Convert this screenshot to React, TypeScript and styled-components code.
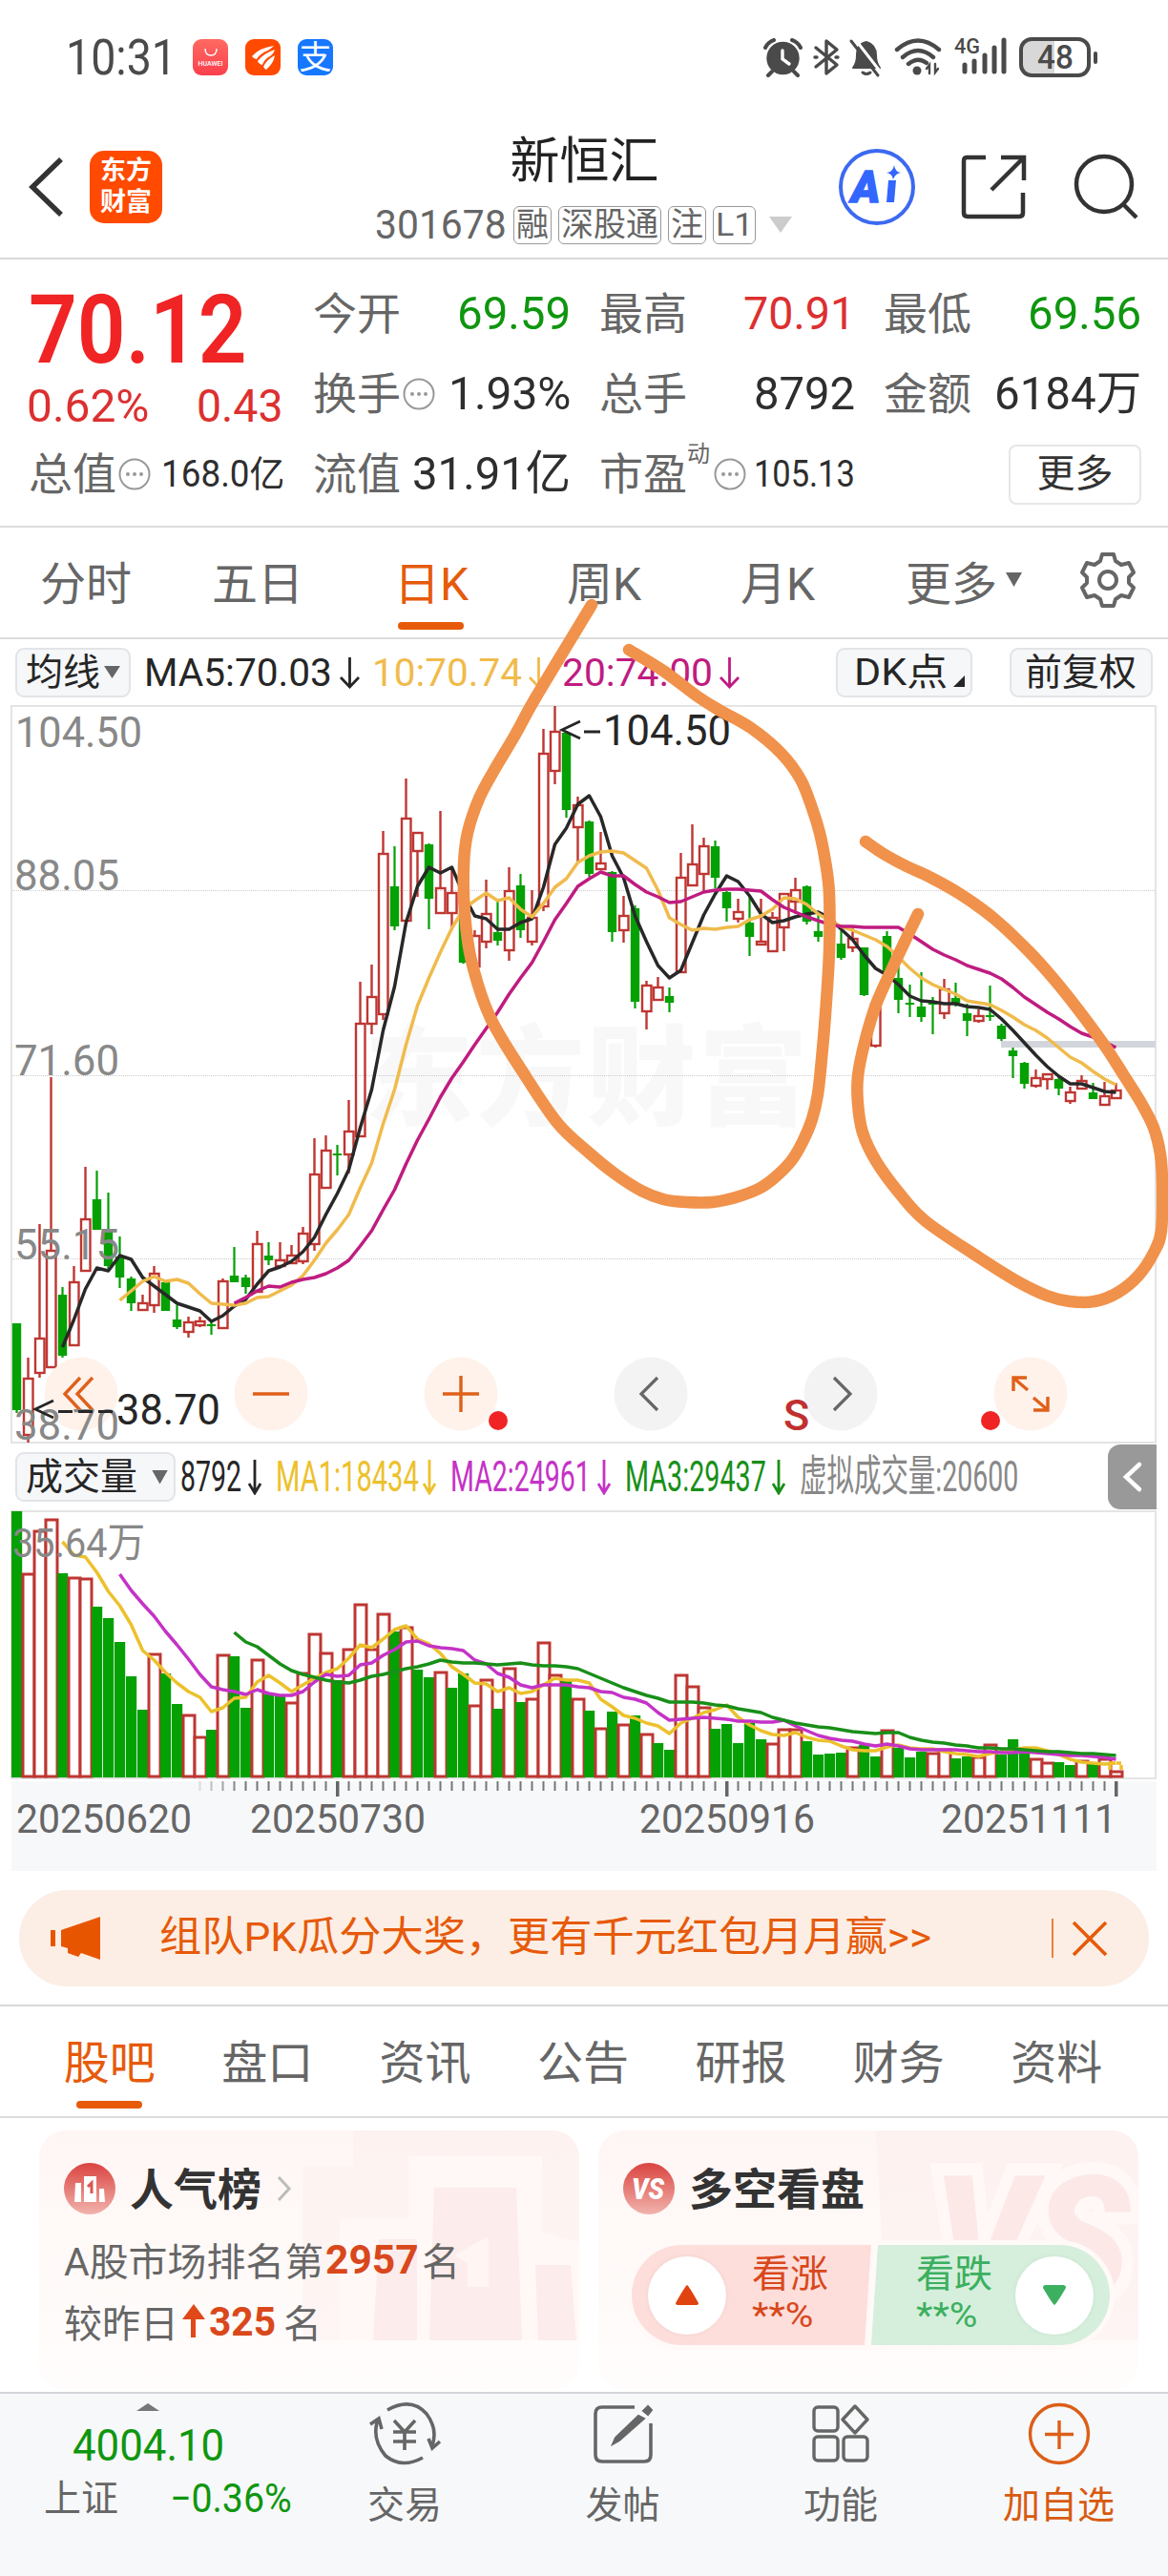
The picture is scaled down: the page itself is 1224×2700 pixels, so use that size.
import React, { useLayoutEffect, useRef, useState } from 'react'
import styled, { createGlobalStyle } from 'styled-components'

const ORANGE = '#e65a0a'
const RED = '#dc3030'
const GREEN = '#0f960f'
const GREY = '#666'
const DARK = '#262626'

const GlobalStyle = createGlobalStyle`
    * { box-sizing: border-box; }
    body {
        margin: 0;
        background: #fff;
        font-family: Roboto, 'Noto Sans CJK SC', sans-serif;
        color: ${DARK};
    }
    svg { display: block; flex: none; }
`

/* ---------- shared ---------- */

const FitBox = styled.span<{ $w: number }>`
    display: block;
    flex: none;
    width: ${(p) => p.$w}px;
    white-space: nowrap;
`

const FitInner = styled.span`
    display: inline-block;
    transform-origin: left center;
`

// squeezes or stretches a text so that it fills a given width
const Fit = ({ w, children }: { w: number; children: React.ReactNode }) => {
    const ref = useRef<HTMLSpanElement>(null)
    const [scale, setScale] = useState(1)
    useLayoutEffect(() => {
        if (ref.current && ref.current.offsetWidth) setScale(w / ref.current.offsetWidth)
    }, [w])
    return (
        <FitBox $w={w}>
            <FitInner ref={ref} style={{ transform: `scaleX(${scale})` }}>{children}</FitInner>
        </FitBox>
    )
}

const Page = styled.div`
    position: relative;
    width: 1224px;
    height: 2700px;
    overflow: hidden;
    background: #fff;
    display: flex;
    flex-direction: column;
`

const Gap = styled.i<{ $w: number }>`
    flex: none;
    width: ${(p) => p.$w}px;
`

const Triangle = styled.i<{ $w: number; $h: number; $color: string; $up?: boolean }>`
    display: block;
    flex: none;
    width: ${(p) => p.$w}px;
    height: ${(p) => p.$h}px;
    background: ${(p) => p.$color};
    clip-path: ${(p) => (p.$up ? 'polygon(50% 0, 100% 100%, 0 100%)' : 'polygon(0 0, 100% 0, 50% 100%)')};
`

/* ---------- status bar ---------- */

const StatusBar = styled.div`
    height: 120px;
    display: flex;
    align-items: center;
    padding: 0 74px 0 69px;
`

const Clock = styled.div`
    font-size: 51px;
    color: #4a4a4a;
    width: 133px;
    line-height: 60px;
    padding-top: 2px;
`

const AppBadge = styled.div<{ $bg: string }>`
    width: 37px;
    height: 38px;
    margin-right: 18px;
    border-radius: 9px;
    background: ${(p) => p.$bg};
    color: #fff;
    display: flex;
    flex-direction: column;
    align-items: center;
    justify-content: center;
    font-size: 34px;
    line-height: 36px;
    overflow: hidden;
`

const Tiny = styled.span`
    font-size: 7px;
    font-weight: 500;
    line-height: 8px;
`

const StatusIcons = styled.div`
    margin-left: auto;
    display: flex;
    align-items: center;
`

const Battery = styled.div`
    width: 75px;
    height: 42px;
    margin-left: 12px;
    border: 4px solid #4a4a4a;
    border-radius: 13px;
    background: linear-gradient(90deg, #d8d8d8 50%, #fff 50%);
    font-size: 35px;
    font-weight: 500;
    line-height: 35px;
    color: #4a4a4a;
    display: flex;
    justify-content: center;
`

const BatteryTip = styled.i`
    width: 4px;
    height: 13px;
    margin-left: 3px;
    border-radius: 2px;
    background: #4a4a4a;
`

/* ---------- header ---------- */

const Header = styled.header`
    height: 152px;
    border-bottom: 2px solid #d8d8d8;
    display: grid;
    grid-template-columns: 393px 435px 1fr;
    align-items: center;
`

const HeaderLeft = styled.div`
    display: flex;
    align-items: center;
    padding: 2px 0 0 28px;
    gap: 26px;
`

const Logo = styled.div`
    width: 76px;
    height: 76px;
    border-radius: 15px;
    background: #ff4a00;
    color: #fff;
    font-size: 27px;
    font-weight: 700;
    line-height: 33px;
    text-align: center;
    padding-top: 5px;
`

const HeaderTitle = styled.div`
    display: flex;
    flex-direction: column;
    align-items: center;
`

const StockName = styled.div`
    font-size: 52px;
    line-height: 66px;
    color: #222;
    margin-top: 15px;
    padding-left: 4px;
`

const CodeLine = styled.div`
    display: flex;
    align-items: center;
    height: 65px;
    gap: 7px;
    font-size: 42px;
    color: ${GREY};
    align-self: stretch;
`

const Tag = styled.span`
    height: 40px;
    border: 1.5px solid #999;
    border-radius: 6px;
    padding: 0 2px;
    font-size: 34px;
    line-height: 36px;
`

const HeaderRight = styled.div`
    display: flex;
    align-items: center;
    padding: 2px 0 0 50px;
    gap: 47px;
`

/* ---------- quote ---------- */

const Quote = styled.section`
    height: 281px;
    padding: 15px 28px 0 30px;
    border-bottom: 2px solid #dcdcdc;
    display: grid;
    grid-template-columns: 267px 269px 267px 269px;
    grid-template-rows: repeat(3, 84px);
    column-gap: 31px;
`

const PriceCell = styled.div`
    grid-row: span 2;
    display: flex;
    flex-direction: column;
`

const Price = styled.div`
    font-size: 101px;
    font-weight: 600;
    line-height: 100px;
    color: #f02424;
    padding-top: 9px;
    height: 112px;
`

const Change = styled.div`
    display: flex;
    justify-content: space-between;
    font-size: 49px;
    line-height: 60px;
    color: ${RED};
    margin-left: -2px;
`

const Cell = styled.div`
    display: flex;
    align-items: center;
    font-size: 46px;
    line-height: 60px;
    color: ${GREY};
`

const Value = styled.div<{ $color?: string; $small?: boolean }>`
    margin: 0 -1px 0 auto;
    font-size: ${(p) => (p.$small ? 38 : 49)}px;
    color: ${(p) => p.$color || '#2e2e2e'};
`

const Sup = styled.span`
    font-size: 24px;
    line-height: 24px;
    align-self: flex-start;
    margin-top: 9px;
    width: 26px;
`

const MoreButton = styled.button`
    margin: 0 -1px 0 auto;
    width: 139px;
    height: 63px;
    border: 2px solid #e6e6e6;
    border-radius: 8px;
    background: #fff;
    font: 40px/56px Roboto, 'Noto Sans CJK SC', sans-serif;
    color: #333;
    padding: 0;
`

/* ---------- period tabs ---------- */

const PeriodTabs = styled.nav`
    height: 117px;
    border-bottom: 2px solid #dcdcdc;
    display: grid;
    grid-template-columns: 180px 180px 184px 178px 186px 204px 1fr;
    padding-right: 14px;
    font-size: 48px;
    color: ${GREY};
`

const Tab = styled.div<{ $active?: boolean }>`
    position: relative;
    display: flex;
    align-items: center;
    justify-content: center;
    gap: 9px;
    padding-bottom: 6px;
    color: ${(p) => (p.$active ? ORANGE : GREY)};
    &::after {
        content: '';
        display: ${(p) => (p.$active ? 'block' : 'none')};
        position: absolute;
        left: calc(50% - 35px);
        bottom: 8px;
        width: 69px;
        height: 8px;
        border-radius: 4px;
        background: ${ORANGE};
    }
`

/* ---------- chart bars ---------- */

const MaRow = styled.div`
    height: 69px;
    display: flex;
    align-items: center;
    padding: 0 16px;
    font-size: 41px;
    line-height: 50px;
`

const Chip = styled.button<{ $w: number }>`
    width: ${(p) => p.$w}px;
    height: 52px;
    border: 2px solid #e2e4e7;
    border-radius: 9px;
    background: #f6f7f9;
    display: flex;
    align-items: center;
    padding: 0 0 0 9px;
    font: 39px/46px Roboto, 'Noto Sans CJK SC', sans-serif;
    color: ${DARK};
    flex: none;
`

const MaText = styled.div<{ $color: string; $ml: number }>`
    display: flex;
    align-items: center;
    color: ${(p) => p.$color};
    margin-left: ${(p) => p.$ml}px;
`

const VolumeRow = styled.div`
    height: 70px;
    display: flex;
    align-items: center;
    padding-left: 16px;
    font-size: 45px;
    line-height: 50px;
`

const FoldButton = styled.button`
    margin: 0 12px 0 auto;
    width: 51px;
    height: 68px;
    border: 0;
    border-radius: 13px 0 0 13px;
    background: #999;
    display: flex;
    align-items: center;
    justify-content: center;
    padding: 0;
`

const ChartArea = styled.div`
    padding-left: 11px;
`

const Marks = styled.svg`
    position: absolute;
    left: 0;
    top: 0;
    pointer-events: none;
`

/* ---------- banner ---------- */

const BannerWrap = styled.div`
    height: 142px;
    padding: 20px 20px 0;
    border-bottom: 2px solid #d8d8d8;
`

const Banner = styled.div`
    height: 101px;
    border-radius: 50px;
    background: #fceee5;
    display: flex;
    align-items: center;
    padding: 0 43px 0 33px;
    font-size: 43px;
    line-height: 60px;
    color: ${ORANGE};
`

const BannerText = styled.div`
    margin-left: 60px;
    padding-bottom: 3px;
`

const Divider = styled.i`
    width: 2px;
    height: 41px;
    background: ${ORANGE};
    opacity: 0.75;
    margin: 0 19px 0 auto;
`

/* ---------- info tabs and cards ---------- */

const InfoTabs = styled.nav`
    height: 117px;
    border-bottom: 2px solid #dcdcdc;
    padding: 0 34px 0 32px;
    display: grid;
    grid-template-columns: repeat(7, 1fr);
    font-size: 48px;
`

const Cards = styled.section`
    height: 287px;
    padding: 13px 31px 0 41px;
    display: grid;
    grid-template-columns: 566px 566px;
    gap: 20px;
`

const Card = styled.div`
    position: relative;
    height: 272px;
    border-radius: 28px;
    background: linear-gradient(#fef6f4, #fffdfc);
    overflow: hidden;
    padding: 30px 26px;
`

const CardArt = styled.svg`
    position: absolute;
    right: 0;
    top: 0;
`

const CardHead = styled.div`
    position: relative;
    display: flex;
    align-items: center;
    height: 62px;
    font-size: 46px;
    font-weight: 700;
    color: #333;
    gap: 15px;
    span { margin-top: -6px; }
`

const CardLines = styled.div`
    position: relative;
    padding-top: 10px;
`

const CardLine = styled.div`
    display: flex;
    align-items: center;
    height: 65px;
    font-size: 40px;
    color: ${GREY};
`

const Hot = styled.b`
    color: #d9481c;
    font-size: 43px;
    margin: 0 3px 0 2px;
`

const Poll = styled.div`
    position: relative;
    width: 511px;
    height: 115px;
    margin: 23px 0 0 4px;
    padding: 5px;
    border-radius: 58px;
    background: #fff9f8;
    display: flex;
`

const PollSide = styled.div<{ $down?: boolean }>`
    width: ${(p) => (p.$down ? 250 : 251)}px;
    height: 105px;
    display: flex;
    align-items: center;
    justify-content: space-between;
    padding: ${(p) => (p.$down ? '0 17px 0 47px' : '0 45px 0 17px')};
    border-radius: ${(p) => (p.$down ? '0 53px 53px 0' : '53px 0 0 53px')};
    background: ${(p) => (p.$down ? '#d5efdc' : '#fddedb')};
    color: ${(p) => (p.$down ? '#3daf60' : '#d9481c')};
    clip-path: ${(p) => (p.$down ? 'polygon(7px 0, 100% 0, 100% 100%, 0 100%)' : 'polygon(0 0, 100% 0, calc(100% - 7px) 100%, 0 100%)')};
`

const Round = styled.div`
    width: 82px;
    height: 82px;
    border-radius: 50%;
    background: #fff;
    box-shadow: 0 0 5px rgba(0, 0, 0, 0.06);
    display: flex;
    align-items: center;
    justify-content: center;
`

const PollText = styled.div`
    font-size: 40px;
    line-height: 47px;
    padding-bottom: 5px;
    div + div { font-size: 36px; line-height: 40px; }
`

/* ---------- bottom bar ---------- */

const BottomBar = styled.footer`
    flex: 1;
    background: #f7f8fa;
    border-top: 2px solid #d2d5d9;
    display: grid;
    grid-template-columns: 310px 228px 229px 228px 229px;
`

const NavItem = styled.div<{ $active?: boolean }>`
    display: flex;
    flex-direction: column;
    align-items: center;
    padding-top: 6px;
    font-size: 39px;
    line-height: 48px;
    color: ${(p) => (p.$active ? '#d85a10' : GREY)};
    svg { margin-bottom: 15px; }
`

const IndexCell = styled.div`
    display: flex;
    flex-direction: column;
    align-items: center;
    padding-top: 10px;
    font-size: 46px;
    color: ${GREEN};
`

const IndexPrice = styled.div`
    line-height: 56px;
    margin-top: 8px;
`

const IndexLine = styled.div`
    display: flex;
    justify-content: space-between;
    align-self: stretch;
    font-size: 42px;
    line-height: 56px;
    padding: 0 4px 0 46px;
`

const IndexName = styled.div`
    font-size: 39px;
    color: ${GREY};
`

/* ---------- chart data ---------- */

const X0 = 17.5
const STEP = 12
const cx = (i: number) => X0 + STEP * i

// [rising, high, body top, body bottom, low]
type Candle = [0 | 1, number, number, number, number]

const candles: Candle[] = [
    [0, 1387, 1387, 1478, 1481], [1, 1423, 1445, 1504, 1512], [1, 1283, 1403, 1439, 1444], [1, 1129, 1311, 1433, 1433],
    [0, 1349, 1357, 1421, 1423], [1, 1327, 1344, 1410, 1410], [1, 1223, 1278, 1332, 1332], [0, 1227, 1257, 1289, 1289],
    [0, 1250, 1290, 1327, 1330], [0, 1296, 1317, 1339, 1350], [0, 1338, 1340, 1366, 1374], [1, 1357, 1366, 1373, 1373],
    [1, 1327, 1335, 1368, 1376], [0, 1344, 1344, 1374, 1374], [0, 1368, 1383, 1391, 1393], [1, 1380, 1386, 1396, 1402],
    [1, 1380, 1385, 1389, 1391], [0, 1385, 1388, 1390, 1399], [1, 1340, 1343, 1392, 1393], [0, 1307, 1337, 1344, 1344],
    [0, 1336, 1339, 1349, 1356], [1, 1290, 1304, 1354, 1354], [0, 1302, 1316, 1321, 1326], [1, 1302, 1321, 1327, 1329],
    [1, 1305, 1316, 1324, 1324], [1, 1286, 1293, 1322, 1325], [1, 1193, 1231, 1304, 1311], [1, 1190, 1206, 1245, 1245],
    [0, 1200, 1209, 1211, 1232], [1, 1153, 1186, 1210, 1230], [1, 1029, 1073, 1191, 1191], [1, 1011, 1045, 1073, 1084],
    [1, 871, 895, 1063, 1069], [0, 887, 929, 971, 975], [1, 816, 858, 965, 965], [1, 872, 873, 892, 940],
    [0, 884, 885, 942, 974], [1, 850, 931, 957, 957], [1, 910, 936, 957, 975], [0, 960, 960, 1009, 1010],
    [1, 975, 981, 1013, 1013], [1, 922, 958, 987, 994], [0, 942, 977, 986, 991], [1, 909, 934, 996, 1007],
    [0, 916, 928, 975, 983], [1, 933, 962, 987, 991], [1, 764, 790, 950, 955], [1, 740, 767, 808, 822],
    [0, 767, 768, 849, 857], [1, 835, 844, 867, 903], [0, 860, 861, 916, 919], [1, 872, 905, 911, 911],
    [0, 913, 914, 977, 987], [1, 939, 960, 975, 988], [0, 949, 952, 1050, 1057], [1, 1028, 1033, 1060, 1079],
    [1, 1024, 1035, 1048, 1049], [0, 1035, 1044, 1051, 1061], [1, 894, 920, 1019, 1019], [1, 864, 906, 928, 929],
    [1, 878, 887, 916, 934], [0, 881, 887, 920, 931], [0, 934, 935, 952, 966], [1, 942, 956, 963, 967],
    [0, 941, 967, 982, 1002], [1, 942, 987, 990, 990], [1, 956, 962, 997, 997], [1, 937, 937, 972, 997],
    [1, 920, 933, 945, 958], [0, 928, 929, 966, 969], [0, 959, 976, 982, 987], [0, 970, 978, 990, 996],
    [0, 976, 989, 1004, 1006], [1, 971, 984, 993, 998], [0, 993, 993, 1043, 1044], [1, 1051, 1052, 1096, 1098],
    [0, 976, 981, 1019, 1019], [0, 1013, 1025, 1048, 1062], [0, 1032, 1051, 1053, 1066], [0, 1019, 1055, 1066, 1071],
    [0, 1045, 1051, 1053, 1084], [1, 1026, 1037, 1062, 1068], [0, 1030, 1046, 1051, 1055], [0, 1052, 1062, 1070, 1086],
    [1, 1058, 1065, 1070, 1072], [0, 1033, 1064, 1066, 1070], [0, 1073, 1075, 1089, 1091], [0, 1098, 1101, 1107, 1130],
    [0, 1113, 1114, 1136, 1141], [1, 1121, 1130, 1138, 1140], [1, 1125, 1126, 1131, 1142], [0, 1129, 1131, 1141, 1148],
    [1, 1139, 1145, 1154, 1157], [1, 1127, 1133, 1141, 1141], [0, 1135, 1145, 1152, 1152], [1, 1134, 1149, 1158, 1158],
    [1, 1135, 1143, 1151, 1151],
]

const ma5 = [
    1412, 1383, 1351, 1329, 1332, 1316, 1320, 1339, 1348, 1357, 1366, 1370, 1374, 1385, 1379, 1369, 1362, 1346, 1332, 1328,
    1322, 1312, 1297, 1273, 1251, 1226, 1182, 1142, 1080, 1034, 967, 929, 909, 915, 909, 937, 960, 963, 974, 974,
    967, 963, 930, 885, 868, 843, 834, 856, 897, 920, 960, 987, 1012, 1025, 1017, 988, 959, 937, 918, 924,
    939, 958, 967, 965, 961, 958, 956, 962, 974, 985, 1001, 1015, 1022, 1032, 1044, 1049, 1050, 1052, 1052, 1055,
    1056, 1058, 1068, 1080, 1093, 1106, 1118, 1128, 1136, 1136, 1140, 1144, 1145,
]

const ma10 = [
    1363, 1353, 1343, 1338, 1343, 1341, 1345, 1356, 1366, 1367, 1368, 1366, 1360, 1359, 1353, 1347, 1337, 1321, 1303, 1289,
    1273, 1245, 1219, 1178, 1142, 1095, 1054, 1025, 998, 973, 953, 944, 936, 944, 941, 953, 961, 947, 930, 921,
    904, 897, 893, 892, 894, 902, 910, 933, 962, 969, 975, 973, 974, 972, 971, 964, 960, 953, 941, 942,
    948, 958, 965, 971, 975, 980, 985, 992, 1003, 1015, 1025, 1032, 1037, 1042, 1049, 1051, 1053, 1059, 1066, 1074,
    1080, 1088, 1098, 1108, 1114, 1123, 1131, 1137,
]

const ma20 = [
    1366, 1360, 1353, 1348, 1349, 1344, 1341, 1339, 1335, 1329, 1321, 1306, 1290, 1268, 1247, 1220, 1195, 1173, 1150, 1130,
    1113, 1095, 1078, 1061, 1042, 1025, 1009, 987, 964, 947, 929, 921, 914, 918, 918, 927, 935, 940, 946, 945,
    940, 935, 933, 932, 932, 933, 934, 943, 951, 956, 961, 965, 969, 971, 971, 972, 972, 972, 972, 979,
    987, 995, 1001, 1006, 1012, 1016, 1020, 1026, 1035, 1045, 1053, 1061, 1068, 1076, 1083, 1087, 1092, 1098,
]

// tops of the volume bars, negative for a rising day
const volumes = [
    1583, -1649, -1604, -1592, 1648, -1653, -1654, 1683, 1695, 1720, 1756, 1791, -1733, 1753, 1785, -1797, -1820, 1812, -1734, 1735,
    1789, -1739, 1775, 1777, -1784, -1753, -1712, -1732, 1760, -1728, -1681, -1728, -1691, 1709, -1705, 1749, 1757, -1752, 1768, 1753,
    -1787, -1760, 1790, -1748, 1783, -1780, -1721, -1755, 1761, -1780, 1792, -1811, 1793, -1807, 1797, -1817, 1826, 1833, -1755, -1767,
    -1789, 1811, 1806, 1826, 1805, 1822, -1827, -1812, -1812, 1824, 1838, 1837, 1836, -1831, 1828, 1840, -1813, 1831, 1841, 1835,
    -1837, -1833, 1842, 1840, -1841, -1828, 1838, 1822, 1836, -1843, -1847, 1846, 1849, -1845, 1848, -1843, -1856,
]

const vma1 = [
    1615, 1629, 1631, 1647, 1667, 1682, 1702, 1729, 1739, 1752, 1763, 1772, 1778, 1793, 1789, 1779, 1778, 1762, 1755, 1763,
    1772, 1765, 1758, 1752, 1748, 1737, 1723, 1726, 1717, 1707, 1703, 1717, 1722, 1732, 1746, 1754, 1763, 1764, 1772, 1768,
    1774, 1772, 1765, 1758, 1760, 1760, 1763, 1780, 1788, 1797, 1800, 1805, 1808, 1816, 1805, 1800, 1794, 1791, 1786, 1799,
    1807, 1813, 1817, 1818, 1815, 1820, 1823, 1824, 1829, 1833, 1834, 1834, 1830, 1828, 1831, 1832, 1832, 1835, 1837, 1838,
    1840, 1837, 1835, 1833, 1831, 1831, 1834, 1838, 1843, 1846, 1847, 1848, 1847,
]

const vma2 = [
    1649, 1666, 1680, 1693, 1709, 1723, 1738, 1754, 1767, 1770, 1772, 1775, 1770, 1774, 1776, 1776, 1772, 1762, 1754, 1756,
    1755, 1744, 1742, 1734, 1728, 1720, 1719, 1724, 1726, 1727, 1729, 1739, 1743, 1753, 1757, 1765, 1768, 1765, 1765, 1765,
    1767, 1768, 1772, 1773, 1778, 1780, 1784, 1794, 1802, 1801, 1800, 1799, 1800, 1801, 1803, 1803, 1804, 1804, 1802, 1808,
    1813, 1818, 1821, 1823, 1824, 1827, 1829, 1827, 1829, 1832, 1833, 1833, 1833, 1833, 1834, 1835, 1835, 1836, 1836, 1835,
    1836, 1837, 1838, 1839, 1839, 1840, 1841, 1843,
]

const vma3 = [
    1710, 1720, 1725, 1734, 1743, 1750, 1754, 1757, 1760, 1762, 1763, 1760, 1756, 1754, 1751, 1748, 1746, 1743, 1739, 1741,
    1742, 1742, 1743, 1744, 1743, 1742, 1744, 1745, 1745, 1746, 1748, 1753, 1758, 1763, 1768, 1772, 1776, 1779, 1783, 1783,
    1783, 1784, 1786, 1787, 1790, 1792, 1794, 1799, 1802, 1805, 1807, 1809, 1810, 1812, 1814, 1815, 1816, 1815, 1815, 1820,
    1823, 1825, 1826, 1828, 1829, 1831, 1831, 1832, 1832, 1833, 1834, 1835, 1835, 1836, 1837, 1837, 1838, 1839,
]

const loopLeft = [
    [620, 634], [562, 730], [540, 770], [518, 807], [502, 837], [490, 873], [486, 907], [487, 957], [494, 1007], [514, 1067],
    [552, 1130], [585, 1178], [617, 1208], [644, 1230], [672, 1248], [695, 1257], [719, 1260], [747, 1260], [771, 1255],
    [795, 1246], [811, 1235], [829, 1217], [841, 1197], [851, 1173], [857, 1147], [861, 1110], [865, 1063], [869, 997],
    [869, 937], [865, 903], [859, 873], [851, 847], [839, 817], [819, 790], [787, 763], [755, 745], [731, 730], [695, 703], [659, 681],
]

const loopRight = [
    [907, 882], [926, 895], [950, 908], [974, 919], [1006, 937], [1042, 963], [1078, 997], [1105, 1027], [1129, 1057], [1157, 1095],
    [1177, 1126], [1197, 1158], [1209, 1182], [1216, 1210], [1218, 1240], [1217, 1290], [1209, 1313], [1193, 1337], [1171, 1355],
    [1147, 1364], [1121, 1364], [1097, 1358], [1066, 1343], [1026, 1318], [970, 1280], [942, 1250], [918, 1217], [904, 1187],
    [899, 1157], [899, 1128], [906, 1093], [918, 1053], [934, 1017], [950, 983], [962, 958],
]

const line = (values: number[], start: number) => values.map((y, i) => `${cx(i + start)},${y}`).join(' ')

// smooth path through the points
const smooth = (pts: number[][]) => {
    let d = `M${pts[0][0]} ${pts[0][1]}`
    for (let i = 0; i < pts.length - 1; i++) {
        const a = pts[i - 1] || pts[i]
        const b = pts[i]
        const c = pts[i + 1]
        const e = pts[i + 2] || c
        d += `C${b[0] + (c[0] - a[0]) / 6} ${b[1] + (c[1] - a[1]) / 6} ${c[0] - (e[0] - b[0]) / 6} ${c[1] - (e[1] - b[1]) / 6} ${c[0]} ${c[1]}`
    }
    return d
}

interface LabelProps {
    x: number;
    y: number;
    w: number;
    size?: number;
    fill?: string;
    children: string;
}

const Label = ({ x, y, w, size = 45, fill = '#888', children }: LabelProps) => (
    <text x={x} y={y} fontSize={size} fill={fill} textLength={w} lengthAdjust="spacingAndGlyphs">{children}</text>
)

const KLineChart = () => (
    <svg width="1202" height="774" viewBox="11 739 1202 774" overflow="visible">
        <rect x="12" y="740" width="1199" height="772" fill="#fff" stroke="#e4e4e4" strokeWidth="2" />
        <g fontSize="114" fontWeight="900" fill="#f8f8f8">
            <text x="382" y="1170" textLength="464">东方财富</text>
        </g>
        {[933, 1127, 1319].map((y) => (
            <line key={y} x1="13" x2="1211" y1={y + 0.5} y2={y + 0.5} stroke="#ccc" strokeDasharray="1 1" />
        ))}
        <rect x="1049" y="1091" width="162" height="7" fill="#d2d6dc" />
        {candles.map(([up, high, top, bottom, low], i) => (
            up ? (
                <g key={i} stroke="#be3632" strokeWidth="2.4" fill="none">
                    <path d={`M${cx(i)} ${high}V${top}M${cx(i)} ${bottom}V${low}`} />
                    <rect x={cx(i) - 4.5} y={top} width="9.5" height={bottom - top} />
                </g>
            ) : (
                <g key={i} fill="#04a004">
                    <rect x={cx(i) - 1.1} y={high} width="2.2" height={low - high} />
                    <rect x={cx(i) - 4.7} y={top} width="9.4" height={bottom - top} />
                </g>
            )
        ))}
        <g fill="none" strokeWidth="3.5" strokeLinejoin="round">
            <polyline points={line(ma5, 4)} stroke="#282828" />
            <polyline points={line(ma10, 9)} stroke="#f0bb4c" />
            <polyline points={line(ma20, 19)} stroke="#bf1c80" />
        </g>
        {[85, 284, 483, 682, 881, 1080].map((x, i) => (
            <circle key={x} cx={x} cy="1461" r="38.5" fill={i === 3 || i === 4 ? '#f2f2f2' : '#fef1ea'} fillOpacity={0.95} />
        ))}
        <g fill="none" stroke="#e0601a" strokeWidth="3.4">
            <path d="M84 1444L68 1461L84 1478M97 1444L81 1461L97 1478" />
            <path d="M265 1461H303M464 1461H502M483 1442V1480" />
            <path d="M1062 1458V1444H1076M1063 1445L1077 1457M1098 1464V1478H1083M1097 1477L1083 1465" />
        </g>
        <g fill="none" stroke="#666" strokeWidth="3.2">
            <path d="M689 1444L672 1461L689 1478M874 1444L891 1461L874 1478" />
        </g>
        <circle cx="522" cy="1489" r="10" fill="#f02424" />
        <circle cx="1038" cy="1489" r="10" fill="#f02424" />
        <text x="821" y="1499" fontSize="45" fontWeight="500" fill="#c03030">S</text>
        <Label x={16} y={783} w={133}>104.50</Label>
        <Label x={15} y={933} w={110}>88.05</Label>
        <Label x={15} y={1127} w={110}>71.60</Label>
        <Label x={15} y={1320} w={110}>55.15</Label>
        <Label x={15} y={1509} w={110}>38.70</Label>
        <g fill="none" stroke="#262626" strokeWidth="2.8">
            <path d="M608 756L589 765L608 774M612 767H629" />
            <path d="M56 1468L37 1477L56 1486M61 1479.5H76M82 1479.5H97M103 1479.5H118" />
        </g>
        <Label x={632} y={781} w={134} fill="#262626">104.50</Label>
        <Label x={122} y={1493} w={109} fill="#262626">38.70</Label>
    </svg>
)

const VolumeChart = () => (
    <svg width="1202" height="378" viewBox="11 1582 1202 378">
        <rect x="12" y="1583" width="1199" height="280" fill="#fff" stroke="#e4e4e4" strokeWidth="2" />
        <rect x="12" y="1866" width="1200" height="94" fill="#f7f8fa" />
        {volumes.map((v, i) => {
            const top = Math.abs(v)
            return v > 0 ? (
                <rect key={i} x={cx(i) - 5.5} y={top} width="11.2" height={1862 - top} fill="#04a004" />
            ) : (
                <rect key={i} x={cx(i) - 5.5} y={top} width="12" height={1861 - top} fill="#fff" stroke="#be3632" strokeWidth="3" />
            )
        })}
        <g fill="none" strokeWidth="3.5" strokeLinejoin="round">
            <polyline points={line(vma1, 4)} stroke="#ecc12c" />
            <polyline points={line(vma2, 9)} stroke="#c433c6" />
            <polyline points={line(vma3, 19)} stroke="#188f18" />
            <path d="M1163 1854V1847H1175V1854" stroke="#f5bd2e" strokeDasharray="5 2" />
        </g>
        <Label x={13} y={1631} w={139} size={43}>35.64万</Label>
        {volumes.map((_, i) => i >= 16 && (
            <rect key={i} x={cx(i) - 1} y="1866" width="2" height="10" fill="#777" opacity={Math.min(1, (i - 15) * 0.22)} />
        ))}
        {[28, 62, 96].map((i) => <rect key={i} x={cx(i) - 1.5} y="1866" width="3.5" height="16" fill="#666" />)}
        <Label x={17} y={1920} w={184} size={42} fill="#666">20250620</Label>
        <Label x={262} y={1920} w={184} size={42} fill="#666">20250730</Label>
        <Label x={670} y={1920} w={184} size={42} fill="#666">20250916</Label>
        <Label x={986} y={1920} w={184} size={42} fill="#666">20251111</Label>
    </svg>
)

/* ---------- icons ---------- */

const Arrow = ({ w = 24, h = 34 }: { w?: number; h?: number }) => (
    <svg width={w} height={h} viewBox={`0 0 ${w} ${h}`} fill="none" stroke="currentColor" strokeWidth="2.8">
        <path d={`M${w / 2} 1V${h - 2}M2 ${h - 12}L${w / 2} ${h - 2}L${w - 2} ${h - 12}`} />
    </svg>
)

const Dots = () => (
    <svg width="37" height="34" viewBox="-2 0 37 34">
        <circle cx="17" cy="17" r="15.5" fill="none" stroke="#999" strokeWidth="2" />
        {[10, 17, 24].map((x) => <circle key={x} cx={x} cy="17" r="2" fill="#999" />)}
    </svg>
)

const StatusGlyphs = () => (
    <svg width="256" height="44" viewBox="799 38 256 44" fill="none" stroke="#4a4a4a" strokeWidth="3.4" strokeLinecap="round">
        <circle cx="819.5" cy="61" r="15.5" fill="#4a4a4a" />
        <path d="M819 53V62L826 67" stroke="#fff" />
        <path d="M801 50Q804 44 810 42M838 50Q835 44 829 42M808 75L804 79M831 75L835 79" strokeWidth="4" />
        <path d="M854 50L876 68L865 77V43L876 52L854 70" strokeLinejoin="round" />
        <path d="M853 60H855M875 60H877" />
        <path d="M893 71Q897 66 897 58Q897 46 907 44Q917 47 917 58Q917 66 921 71Z" fill="#4a4a4a" strokeLinejoin="round" strokeWidth="2" />
        <path d="M903 76Q907 79 911 76" strokeWidth="3" />
        <path d="M895 41L923 77" stroke="#fff" strokeWidth="3" />
        <path d="M891 43L919 79" strokeWidth="3" />
        <path d="M939 52Q961 33 983 52M945 60Q961 46 977 60M951 67Q961 59 970 66" strokeWidth="4.4" />
        <circle cx="960" cy="74" r="4.5" fill="#4a4a4a" stroke="none" />
        <path d="M970 72L973 68V77M982 72L979 76V67" strokeWidth="2.4" />
        <path d="M1010 68V75M1020 64V75M1031 58V75M1041 50V75M1051 42V75" strokeWidth="5" />
        <text x="999" y="56" fontSize="22" fontWeight="500" fill="#4a4a4a" stroke="none" textLength="27" lengthAdjust="spacingAndGlyphs">4G</text>
    </svg>
)

const infoTabs = ['股吧', '盘口', '资讯', '公告', '研报', '财务', '资料']

export default function App() {
    return (
        <Page>
            <GlobalStyle />
            <StatusBar>
                <Clock><Fit w={116}>10:31</Fit></Clock>
                <AppBadge $bg="linear-gradient(#ff6a62, #fa3f4c)">
                    <svg width="16" height="13" viewBox="0 0 16 13" fill="none" stroke="#fff" strokeWidth="1.4"><path d="M2 1Q2 8 8 8Q14 8 14 1" /></svg>
                    <Tiny>HUAWEI</Tiny>
                </AppBadge>
                <AppBadge $bg="#ff4a00">
                    <svg width="28" height="28" viewBox="0 0 28 28" fill="#fff">
                        <path d="M2 13Q10 4 25 2Q20 7 16 8Q9 12 7 16Q4 16 2 13ZM8 18Q14 10 26 6Q24 12 19 14Q14 18 13 22Q9 21 8 18ZM14 24Q17 17 26 12Q25 20 17 27Q15 26 14 24Z" />
                    </svg>
                </AppBadge>
                <AppBadge $bg="#1677ff">支</AppBadge>
                <StatusIcons>
                    <StatusGlyphs />
                    <Battery><Fit w={38}>48</Fit></Battery>
                    <BatteryTip />
                </StatusIcons>
            </StatusBar>

            <Header>
                <HeaderLeft>
                    <svg width="40" height="64" viewBox="0 0 40 64" fill="none" stroke="#333" strokeWidth="5.5"><path d="M36 3L6 32L36 61" /></svg>
                    <Logo>东方<br />财富</Logo>
                </HeaderLeft>
                <HeaderTitle>
                    <StockName>新恒汇</StockName>
                    <CodeLine>
                        <Fit w={138}>301678</Fit>
                        <Tag><Fit w={34}>融</Fit></Tag>
                        <Tag><Fit w={102}>深股通</Fit></Tag>
                        <Tag><Fit w={34}>注</Fit></Tag>
                        <Tag><Fit w={39}>L1</Fit></Tag>
                        <Gap $w={0} />
                        <Triangle $w={24} $h={17} $color="#ccc" />
                    </CodeLine>
                </HeaderTitle>
                <HeaderRight>
                    <svg width="82" height="82" viewBox="0 0 82 82">
                        <circle cx="41" cy="41" r="38" fill="none" stroke="#3c69f0" strokeWidth="4" />
                        <text x="14" y="57" fontSize="46" fontWeight="900" fontStyle="italic" fill="#3366ff" stroke="#3366ff" strokeWidth="1.5">A</text>
                        <path d="M53 34H61L59 57H51Z" fill="#3366ff" />
                        <path d="M59 18Q60 25 66 26Q60 27 58 33Q57 27 51 26Q58 25 59 18Z" fill="#3366ff" />
                    </svg>
                    <svg width="70" height="70" viewBox="0 0 70 70" fill="none" stroke="#333" strokeWidth="4.5">
                        <path d="M26 4H6Q3 4 3 8V62Q3 66 7 66H61Q65 66 65 62V41M42 4H66V28M65 5L32 38" />
                    </svg>
                    <svg width="70" height="70" viewBox="0 0 70 70" fill="none" stroke="#333" strokeWidth="4.5">
                        <circle cx="33" cy="32" r="29" />
                        <path d="M54 54L67 67" />
                    </svg>
                </HeaderRight>
            </Header>

            <Quote>
                <PriceCell>
                    <Price><Fit w={229}>70.12</Fit></Price>
                    <Change><Fit w={128}>0.62%</Fit><Fit w={91}>0.43</Fit></Change>
                </PriceCell>
                <Cell>今开<Value $color={GREEN}><Fit w={119}>69.59</Fit></Value></Cell>
                <Cell>最高<Value $color={RED}><Fit w={117}>70.91</Fit></Value></Cell>
                <Cell>最低<Value $color={GREEN}><Fit w={119}>69.56</Fit></Value></Cell>
                <Cell>换手<Dots /><Value><Fit w={128}>1.93%</Fit></Value></Cell>
                <Cell>总手<Value><Fit w={106}>8792</Fit></Value></Cell>
                <Cell>金额<Value><Fit w={154}>6184万</Fit></Value></Cell>
                <Cell>总值<Dots /><Value $small><Fit w={129}>168.0亿</Fit></Value></Cell>
                <Cell>流值<Value><Fit w={166}>31.91亿</Fit></Value></Cell>
                <Cell>市盈<Sup>动</Sup><Dots /><Value $small><Fit w={106}>105.13</Fit></Value></Cell>
                <Cell><MoreButton>更多</MoreButton></Cell>
            </Quote>

            <PeriodTabs>
                <Tab>分时</Tab>
                <Tab>五日</Tab>
                <Tab $active>日K</Tab>
                <Tab>周K</Tab>
                <Tab>月K</Tab>
                <Tab>更多<Triangle $w={17} $h={15} $color="#666" /></Tab>
                <Tab>
                    <svg width="60" height="60" viewBox="0 0 60 60" fill="none" stroke="#666" strokeWidth="4" strokeLinejoin="round">
                        <path d="M24 3H36L38 10L44 14L52 12L57 22L52 27V33L57 38L52 48L44 46L38 50L36 57H24L22 50L16 46L8 48L3 38L8 33V27L3 22L8 12L16 14L22 10Z" />
                        <circle cx="30" cy="30" r="9" />
                    </svg>
                </Tab>
            </PeriodTabs>

            <MaRow>
                <Chip $w={121}>均线<Gap $w={4} /><Triangle $w={17} $h={13} $color="#666" /></Chip>
                <MaText $color={DARK} $ml={14}><Fit w={197}>MA5:70.03</Fit><Gap $w={7} /><Arrow w={23} /></MaText>
                <MaText $color="#f0bb4c" $ml={12}><Fit w={157}>10:70.74</Fit><Gap $w={6} /><Arrow w={23} /></MaText>
                <MaText $color="#bf1c80" $ml={13}><Fit w={158}>20:74.00</Fit><Gap $w={6} /><Arrow w={23} /></MaText>
                <Gap $w={100} />
                <Chip $w={143}><Gap $w={4} /><Fit w={98}>DK点</Fit><svg width="24" height="34" viewBox="0 0 24 34"><path d="M22 20V32H10Z" fill="#262626" /></svg></Chip>
                <Gap $w={39} />
                <Chip $w={150}><Gap $w={5} />前复权</Chip>
            </MaRow>

            <ChartArea><KLineChart /></ChartArea>

            <VolumeRow>
                <Chip $w={168}>成交量<Gap $w={15} /><Triangle $w={17} $h={15} $color="#666" /></Chip>
                <MaText $color={DARK} $ml={5}><Fit w={64}>8792</Fit><Gap $w={6} /><Arrow w={16} h={38} /></MaText>
                <MaText $color="#ecc12c" $ml={14}><Fit w={150}>MA1:18434</Fit><Gap $w={3} /><Arrow w={16} h={38} /></MaText>
                <MaText $color="#c433c6" $ml={14}><Fit w={147}>MA2:24961</Fit><Gap $w={6} /><Arrow w={16} h={38} /></MaText>
                <MaText $color="#188f18" $ml={14}><Fit w={148}>MA3:29437</Fit><Gap $w={5} /><Arrow w={16} h={38} /></MaText>
                <MaText $color="#888" $ml={14}><Fit w={229}>虚拟成交量:20600</Fit></MaText>
                <FoldButton>
                    <svg width="22" height="34" viewBox="0 0 22 34" fill="none" stroke="#fff" strokeWidth="4.5" strokeLinecap="round"><path d="M18 4L4 17L18 30" /></svg>
                </FoldButton>
            </VolumeRow>

            <ChartArea><VolumeChart /></ChartArea>

            <BannerWrap>
                <Banner>
                    <svg width="54" height="46" viewBox="0 0 54 46" fill="#e85500">
                        <path d="M0 14H5V31H0ZM11 14L52 0V45L32 38L29 42L18 38V33L11 31Z" />
                    </svg>
                    <BannerText><Fit w={809}>组队PK瓜分大奖，更有千元红包月月赢&gt;&gt;</Fit></BannerText>
                    <Divider />
                    <svg width="38" height="38" viewBox="0 0 38 38" stroke={ORANGE} strokeWidth="3.6"><path d="M2 2L36 36M36 2L2 36" /></svg>
                </Banner>
            </BannerWrap>

            <InfoTabs>
                {infoTabs.map((name, i) => <Tab key={name} $active={i === 0}>{name}</Tab>)}
            </InfoTabs>

            <Cards>
                <Card>
                    <CardArt width="290" height="272" viewBox="317 2233 290 272">
                        <path d="M370 2233H607V2453H317V2270H370Z" fill="#fceeec" opacity="0.4" />
                        <path d="M356 2326H428V2260H568V2340L607 2350V2453H356Z" fill="#fff8f6" />
                        <path d="M455 2293H541L547 2453H450ZM397 2347H437V2453H391ZM561 2374H598L604 2453H564Z" fill="#fceceb" />
                        <path d="M476 2364L512 2344V2397H490V2372Z" fill="#fff5f3" />
                    </CardArt>
                    <CardHead>
                        <svg width="54" height="54" viewBox="0 0 54 54">
                            <defs><linearGradient id="badge" x1="0" y1="0" x2="0" y2="1"><stop offset="0" stopColor="#da4440" /><stop offset="1" stopColor="#f1b3ac" /></linearGradient></defs>
                            <circle cx="27" cy="27" r="27" fill="url(#badge)" />
                            <path d="M12 21H18V41H11ZM21 14H34V41H21ZM37 27H42L43 41H37Z" fill="#fff" />
                            <path d="M25 25L29 21V32" fill="none" stroke="#da5550" strokeWidth="3" />
                        </svg>
                        <span>人气榜</span>
                        <svg width="18" height="28" viewBox="0 0 18 28" fill="none" stroke="#bbb" strokeWidth="3"><path d="M3 2L14 14L3 26" /></svg>
                    </CardHead>
                    <CardLines>
                        <CardLine><Fit w={272}>A股市场排名第</Fit><Hot><Fit w={98}>2957</Fit></Hot>名</CardLine>
                        <CardLine>
                            <Fit w={120}>较昨日</Fit>
                            <svg width="30" height="36" viewBox="0 0 30 36" fill="#e04818"><path d="M16 0L28 16H18V35H13V16H4Z" /></svg>
                            <Hot><Fit w={70}>325</Fit></Hot><Gap $w={5} />名
                        </CardLine>
                    </CardLines>
                </Card>
                <Card>
                    <CardArt width="290" height="272" viewBox="903 2233 290 272">
                        <path d="M918 2233H1193V2453H930Z" fill="#fceeec" opacity="0.5" />
                        <text x="978" y="2408" fontSize="180" fontWeight="900" fontStyle="italic" fill="#fce9e7" stroke="#fff8f6" strokeWidth="26" paintOrder="stroke" textLength="206" lengthAdjust="spacingAndGlyphs">VS</text>
                    </CardArt>
                    <CardHead>
                        <svg width="54" height="54" viewBox="0 0 54 54">
                            <circle cx="27" cy="27" r="27" fill="url(#badge)" />
                            <text x="9" y="38" fontSize="32" fontWeight="900" fontStyle="italic" fill="#fff" textLength="34" lengthAdjust="spacingAndGlyphs">VS</text>
                        </svg>
                        <span>多空看盘</span>
                    </CardHead>
                    <Poll>
                        <PollSide>
                            <Round><svg width="26" height="22" viewBox="0 0 26 22" fill="#e04310"><path d="M13 0Q15 1 25 19Q25 21 22 21H4Q1 21 1 19Q11 1 13 0Z" /></svg></Round>
                            <PollText><div>看涨</div><div><Fit w={64}>**%</Fit></div></PollText>
                        </PollSide>
                        <PollSide $down>
                            <PollText><div>看跌</div><div><Fit w={64}>**%</Fit></div></PollText>
                            <Round><svg width="26" height="22" viewBox="0 0 26 22" fill="#3daf60"><path d="M13 21Q15 20 25 3Q25 0 22 0H4Q1 0 1 3Q11 20 13 21Z" /></svg></Round>
                        </PollSide>
                    </Poll>
                </Card>
            </Cards>

            <BottomBar>
                <IndexCell>
                    <Triangle $w={24} $h={8} $color="#777" $up />
                    <IndexPrice><Fit w={159}>4004.10</Fit></IndexPrice>
                    <IndexLine><IndexName>上证</IndexName><Fit w={128}>−0.36%</Fit></IndexLine>
                </IndexCell>
                <NavItem>
                    <svg width="76" height="72" viewBox="386 2515 76 72" fill="none" stroke="#666" strokeWidth="3.6">
                        <path d="M406 2526Q431 2512 447 2530Q459 2546 453 2563M443 2576Q421 2588 404 2574Q389 2556 396 2536M388 2541L397 2535L400 2546M461 2559L453 2566L449 2556" />
                        <path d="M413 2537L424 2549L435 2537M424 2549V2568M412 2549H436M412 2559H436" />
                    </svg>
                    交易
                </NavItem>
                <NavItem>
                    <svg width="76" height="72" viewBox="615 2515 76 72" fill="none" stroke="#666" strokeWidth="3.6">
                        <path d="M665 2523H631Q624 2523 624 2530V2573Q624 2580 631 2580H675Q682 2580 682 2573V2540" />
                        <path d="M669 2532L675 2535L649 2558L642 2562L645 2555Z" fill="#666" strokeWidth="2" />
                        <path d="M674 2527L679 2522L683 2526L679 2531Z" fill="#666" strokeWidth="2" />
                    </svg>
                    发帖
                </NavItem>
                <NavItem>
                    <svg width="76" height="72" viewBox="843 2515 76 72" fill="none" stroke="#666" strokeWidth="3.4" strokeLinejoin="round">
                        <rect x="853" y="2523" width="25" height="25" rx="4" />
                        <rect x="853" y="2554" width="25" height="25" rx="4" />
                        <rect x="884" y="2554" width="25" height="25" rx="4" />
                        <path d="M896 2522L909 2536L896 2550L883 2536Z" />
                    </svg>
                    功能
                </NavItem>
                <NavItem $active>
                    <svg width="76" height="72" viewBox="1072 2515 76 72" fill="none" stroke="#dc5f18" strokeWidth="3.4">
                        <circle cx="1110" cy="2551" r="30.5" />
                        <path d="M1095 2551.500H1125M1110 2537V2567" />
                    </svg>
                    加自选
                </NavItem>
            </BottomBar>

            <Marks width="1224" height="2700" viewBox="0 0 1224 2700" fill="none" stroke="#f0924b" strokeWidth="12.5" strokeLinecap="round">
                <path d={smooth(loopLeft)} />
                <path d={smooth(loopRight)} />
            </Marks>
        </Page>
    )
}
